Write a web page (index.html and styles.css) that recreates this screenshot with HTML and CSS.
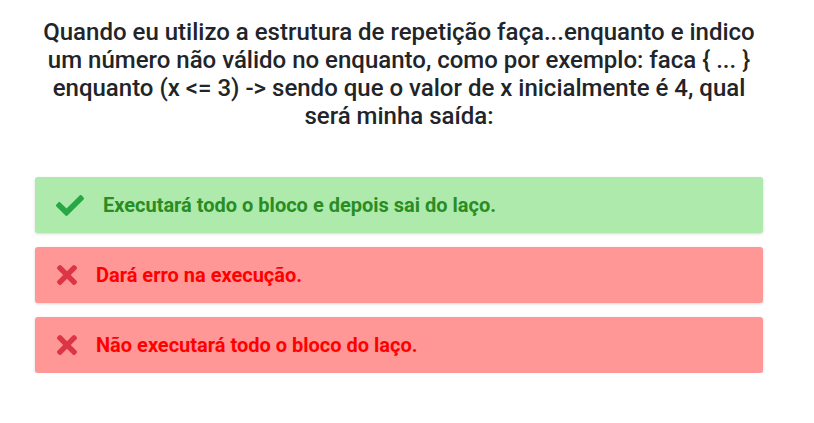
FILE: index.html
```html
<!DOCTYPE html>
<html lang="pt">
<head>
<meta charset="utf-8">
<title>Quiz</title>
<link rel="stylesheet" href="styles.css">
</head>
<body>
<main class="page">
  <h1 class="question">Quando eu utilizo a estrutura de repetição faça...enquanto e indico um número não válido no enquanto, como por exemplo: faca { ... } enquanto (x &lt;= 3) -&gt; sendo que o valor de x inicialmente é 4, qual será minha saída:</h1>
  <div class="answers">
    <div class="answer correct">
      <svg class="icon icon-check" viewBox="0 65 512 382" aria-hidden="true"><path d="M173.898 439.404l-166.4-166.4c-9.997-9.997-9.997-26.206 0-36.204l36.203-36.204c9.997-9.998 26.207-9.998 36.204 0L192 312.69 432.095 72.596c9.997-9.997 26.207-9.997 36.204 0l36.203 36.204c9.997 9.997 9.997 26.206 0 36.204l-294.4 294.401c-9.998 9.997-26.207 9.997-36.204-.001z"/></svg>
      <span class="label">Executará todo o bloco e depois sai do laço.</span>
    </div>
    <div class="answer wrong">
      <svg class="icon icon-times" viewBox="0 80 352 352" aria-hidden="true"><path d="M242.72 256l100.07-100.07c12.28-12.28 12.28-32.19 0-44.48l-22.24-22.24c-12.28-12.28-32.19-12.28-44.48 0L176 189.28 75.93 89.21c-12.28-12.28-32.19-12.28-44.48 0L9.21 111.45c-12.28 12.28-12.28 32.19 0 44.48L109.28 256 9.21 356.07c-12.28 12.28-12.28 32.19 0 44.48l22.24 22.24c12.28 12.28 32.2 12.28 44.48 0L176 322.72l100.07 100.07c12.28 12.28 32.2 12.28 44.48 0l22.24-22.24c12.28-12.28 12.28-32.19 0-44.48L242.72 256z"/></svg>
      <span class="label">Dará erro na execução.</span>
    </div>
    <div class="answer wrong">
      <svg class="icon icon-times" viewBox="0 80 352 352" aria-hidden="true"><path d="M242.72 256l100.07-100.07c12.28-12.28 12.28-32.19 0-44.48l-22.24-22.24c-12.28-12.28-32.19-12.28-44.48 0L176 189.28 75.93 89.21c-12.28-12.28-32.19-12.28-44.48 0L9.21 111.45c-12.28 12.28-12.28 32.19 0 44.48L109.28 256 9.21 356.07c-12.28 12.28-12.28 32.19 0 44.48l22.24 22.24c12.28 12.28 32.2 12.28 44.48 0L176 322.72l100.07 100.07c12.28 12.28 32.2 12.28 44.48 0l22.24-22.24c12.28-12.28 12.28-32.19 0-44.48L242.72 256z"/></svg>
      <span class="label">Não executará todo o bloco do laço.</span>
    </div>
  </div>
</main>
</body>
</html>
```

FILE: styles.css
```css
html, body {
  margin: 0;
  padding: 0;
  background: #ffffff;
}

body {
  font-family: Roboto, "Liberation Sans", Arial, sans-serif;
}

.page {
  width: 728px;
  padding: 18px 0 0 35px;
}

.question {
  margin: 0 0 47px 0;
  font-size: 24px;
  line-height: 28px;
  font-weight: 500;
  color: #212529;
  text-align: center;
}

.answers {
  display: flex;
  flex-direction: column;
  gap: 14px;
}

.answer {
  height: 56px;
  display: flex;
  align-items: center;
  gap: 19px;
  padding-left: 21px;
  border-radius: 3px;
  box-shadow: 0 1px 3px rgba(0, 0, 0, 0.16);
  font-size: 20px;
  font-weight: 700;
  box-sizing: border-box;
}

.correct {
  background: #aeeaac;
  color: #2a8d23;
}

.wrong {
  background: #ff9797;
  color: #ff0000;
}

.icon {
  flex: none;
}

.icon-check {
  width: 28px;
  height: 21px;
  fill: #28a745;
}

.icon-times {
  width: 20px;
  height: 20px;
  margin-left: 1px;
  fill: #dc3545;
}
```
